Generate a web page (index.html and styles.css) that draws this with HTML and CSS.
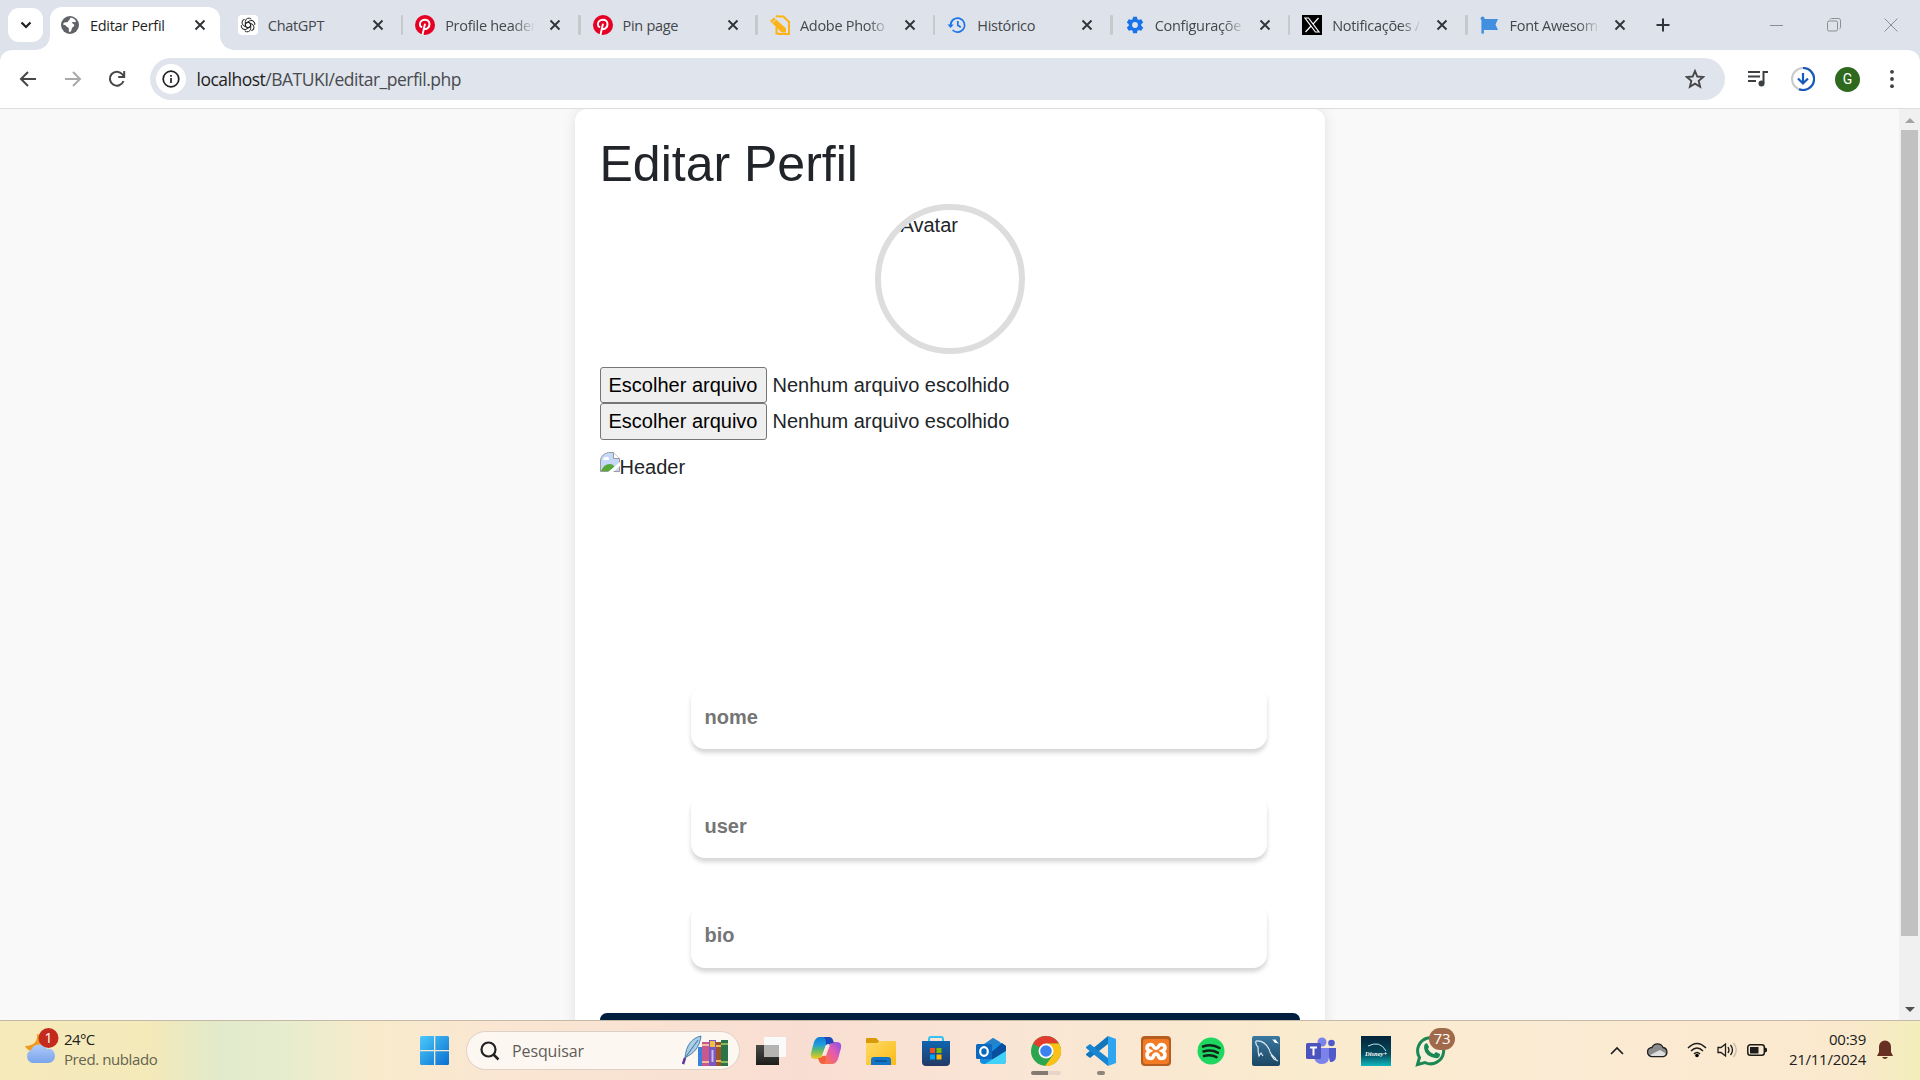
FILE: index.html
```html
<!DOCTYPE html>
<html lang="pt-BR">
<head>
<meta charset="utf-8">
<title>Editar Perfil</title>
<link rel="stylesheet" href="styles.css">
</head>
<body>
<svg class="defs" width="0" height="0">
  <defs>
    <symbol id="close" viewBox="0 0 12 12"><path d="M1.500 1.500l9 9m0-9l-9 9" stroke="currentColor" stroke-width="1.900" fill="none"/></symbol>
    <symbol id="pin" viewBox="0 0 24 24"><circle cx="12" cy="12" r="12" fill="#e60023"/><path d="M9 23.600l2.800-12.300M10.700 16c1 1.500 6.700 1 6.700-5.200 0-3.400-2.700-5.200-5.500-5.200-4 0-6 2.900-6 5.500 0 1.500.7 2.800 1.800 3.200" fill="none" stroke="#fff" stroke-width="2.300" stroke-linecap="round"/></symbol>
    <linearGradient id="win" x1="0" y1="0" x2="1" y2="1"><stop offset="0" stop-color="#4cc9fb"/><stop offset="1" stop-color="#0a6fd0"/></linearGradient>
    <linearGradient id="store" x1="0" y1="0" x2="0" y2="1"><stop offset="0" stop-color="#0f65b0"/><stop offset="1" stop-color="#243864"/></linearGradient>
    <linearGradient id="folder" x1="0" y1="0" x2="1" y2="1"><stop offset="0" stop-color="#ffda66"/><stop offset="1" stop-color="#fbbb16"/></linearGradient>
    <linearGradient id="copA" x1="0" y1="0" x2="0" y2="1"><stop offset="0" stop-color="#137ad5"/><stop offset=".35" stop-color="#1f9ddd"/><stop offset=".6" stop-color="#5fba6a"/><stop offset="1" stop-color="#f3cc21"/></linearGradient>
    <linearGradient id="copB" x1="1" y1="0" x2="0" y2="1"><stop offset="0" stop-color="#8150ef"/><stop offset=".45" stop-color="#e55bae"/><stop offset="1" stop-color="#ff7a35"/></linearGradient>
    <linearGradient id="cloud" x1="0" y1="0" x2="0" y2="1"><stop offset="0" stop-color="#aecbfa"/><stop offset="1" stop-color="#7ba4ec"/></linearGradient>
    <linearGradient id="mysql" x1="0" y1="0" x2="0" y2="1"><stop offset="0" stop-color="#3b78a0"/><stop offset="1" stop-color="#1c4663"/></linearGradient>
    <linearGradient id="disney" x1="0" y1="0" x2="0" y2="1"><stop offset="0" stop-color="#02243a"/><stop offset=".6" stop-color="#044a5c"/><stop offset="1" stop-color="#10b8c0"/></linearGradient>
    <linearGradient id="task" x1="0" y1="0" x2="0" y2="1"><stop offset="0" stop-color="#4a4a48"/><stop offset="1" stop-color="#1d1d1b"/></linearGradient>
  </defs>
</svg>

<header class="browser">
  <div class="tabstrip">
    <div class="tab-search"><svg width="12" height="8" viewBox="0 0 12 8"><path d="M1.500 1.500L6 6l4.500-4.500" fill="none" stroke="#1f1f1f" stroke-width="2.200"/></svg></div>
    <div class="tab active">
      <svg class="fav" viewBox="0 0 20 20"><circle cx="10" cy="10" r="9" fill="#5f6368"/><path d="M10.500 2.800c2.600.2 4.600 1.500 5.600 3.500-.7 1.300-2.300 1.200-3.200.5-1.200.8-1.100 1.500.2 1.900 1.600.5 1.600 2.700 0 3.200-1.800.5-.8 3.300-3.100 5.300-1.600-.3-1.300-2.200-1-3.300C8.500 12 6 12.200 5.500 10.300L3 9.500c.5-1.700 1.500-2.600 3.300-2.300 2.200.4 1.500-1.400 2.700-1.900 1.300-.6.4-1.800 1.500-2.500z" fill="#fff"/></svg>
      <span class="tab-title">Editar Perfil</span><svg class="x"><use href="#close"/></svg>
    </div>
    <div class="tab nosep">
      <svg class="fav" viewBox="0 0 20 20"><rect width="20" height="20" rx="4" fill="#fff"/><g fill="none" stroke="#222" stroke-width="1"><path id="petal" d="M10 7.200l2.700 1.500v4.800a3.500 3.500 0 0 1-6 2.300"/><use href="#petal" transform="rotate(60 10 10)"/><use href="#petal" transform="rotate(120 10 10)"/><use href="#petal" transform="rotate(180 10 10)"/><use href="#petal" transform="rotate(240 10 10)"/><use href="#petal" transform="rotate(300 10 10)"/></g></svg>
      <span class="tab-title">ChatGPT</span><svg class="x"><use href="#close"/></svg>
    </div>
    <div class="tab"><svg class="fav"><use href="#pin"/></svg><span class="tab-title fade">Profile header</span><svg class="x"><use href="#close"/></svg></div>
    <div class="tab"><svg class="fav"><use href="#pin"/></svg><span class="tab-title">Pin page</span><svg class="x"><use href="#close"/></svg></div>
    <div class="tab">
      <svg class="fav" viewBox="0 0 20 20"><path d="M8 1.500h5.500L19 7v12H8" fill="none" stroke="#fbb317" stroke-width="2"/><path d="M6 2l2-1.500M6.500 12v6.500H9" stroke="#fbb317" stroke-width="2" fill="none"/><path d="M0 6l4-3.500L16 13.500v4h-4.500z" fill="#fbb317"/><path d="M2.500 7.500l4-3.500" stroke="#dee1e9"/></svg>
      <span class="tab-title fade">Adobe Photo</span><svg class="x"><use href="#close"/></svg>
    </div>
    <div class="tab">
      <svg class="fav" viewBox="0 0 20 20"><path d="M3.600 10a7 7 0 1 1 2 5M10.800 6v4.300l3 2" fill="none" stroke="#1a73e8" stroke-width="1.700"/><path d="M.5 9.500h6.200L3.600 13z" fill="#1a73e8"/></svg>
      <span class="tab-title">Histórico</span><svg class="x"><use href="#close"/></svg>
    </div>
    <div class="tab">
      <svg class="fav" viewBox="0 0 24 24"><path fill="#1a73e8" d="M19.430 12.980c.04-.32.070-.64.070-.98s-.03-.66-.07-.98l2.110-1.650c.19-.15.240-.42.120-.64l-2-3.460c-.12-.22-.39-.3-.61-.22l-2.490 1c-.52-.4-1.080-.73-1.690-.98l-.38-2.650A.488.488 0 0 0 14 2h-4c-.25 0-.46.180-.49.420l-.38 2.650c-.61.250-1.170.59-1.690.98l-2.490-1c-.23-.09-.49 0-.61.220l-2 3.460c-.13.220-.07.490.12.640l2.110 1.650c-.04.320-.07.650-.07.980s.03.660.07.980l-2.110 1.650c-.19.150-.24.420-.12.640l2 3.460c.12.220.39.300.61.220l2.490-1c.52.400 1.080.73 1.690.98l.38 2.650c.03.240.24.420.49.420h4c.25 0 .46-.18.490-.42l.38-2.650c.61-.25 1.170-.59 1.690-.98l2.490 1c.23.090.49 0 .61-.22l2-3.460c.12-.22.070-.49-.12-.64l-2.110-1.650zM12 15.500a3.500 3.500 0 1 1 0-7 3.500 3.500 0 0 1 0 7z"/></svg>
      <span class="tab-title fade">Configuraçõe</span><svg class="x"><use href="#close"/></svg>
    </div>
    <div class="tab">
      <svg class="fav" viewBox="0 0 20 20"><path d="M0 0h20v20H0z"/><path d="M3 3h3.500L17 17h-3.500zM16.500 3L11 9.200M9 11l-5.500 6" fill="none" stroke="#fff" stroke-width="1.200"/></svg>
      <span class="tab-title fade">Notificações /</span><svg class="x"><use href="#close"/></svg>
    </div>
    <div class="tab">
      <svg class="fav" viewBox="0 0 20 20"><path d="M2 3h1.200v15H2z" stroke="#418fde" stroke-width="1.200"/><path d="M2.500 4H18l-2.500 5.500L18 15H2.500z" fill="#418fde"/><circle cx="2.600" cy="3.500" r="2" fill="#418fde"/></svg>
      <span class="tab-title fade">Font Awesom</span><svg class="x"><use href="#close"/></svg>
    </div>
    <div class="new-tab"><svg width="14" height="14" viewBox="0 0 14 14"><path d="M7 .5v13M.5 7h13" stroke="#303438" stroke-width="2"/></svg></div>
    <div class="win-controls">
      <svg width="14" height="14" viewBox="0 0 14 14"><path d="M0 7.500h13" stroke="#8b8e93"/></svg>
      <svg width="14" height="14" viewBox="0 0 14 14"><rect x=".5" y="3" width="10" height="10" rx="1.500" fill="none" stroke="#8b8e93"/><path d="M3 1.500q.3-1 1.500-1h7q2 0 2 2v7q0 1-1 1.500" fill="none" stroke="#8b8e93"/></svg>
      <svg width="14" height="14" viewBox="0 0 14 14"><path d="M.5.5l13 13m0-13l-13 13" stroke="#8b8e93"/></svg>
    </div>
  </div>
  <div class="toolbar">
    <svg class="nav" viewBox="0 0 20 20"><path d="M18 10H3.500M10 3l-7 7 7 7" fill="none" stroke="#474747" stroke-width="2"/></svg>
    <svg class="nav" viewBox="0 0 20 20"><path d="M2 10h14.500M10 3l7 7-7 7" fill="none" stroke="#a9a9a9" stroke-width="2"/></svg>
    <svg class="nav" viewBox="0 0 20 20"><path d="M16.500 12a7 7 0 1 1-1-6.500L17 7.500M17.200 2v6h-6" fill="none" stroke="#474747" stroke-width="2"/></svg>
    <div class="omnibox">
      <span class="site-info"><svg width="18" height="18" viewBox="0 0 18 18"><circle cx="9" cy="9" r="7.800" fill="none" stroke="#202124" stroke-width="1.700"/><path d="M9 8v5M9 5v1.800" stroke="#202124" stroke-width="1.700"/></svg></span>
      <span class="url">localhost<span class="path">/BATUKI/editar_perfil.php</span></span>
      <svg class="star" viewBox="0 0 20 20"><path d="M10 2l2.300 5.500 6 .5-4.600 3.900 1.400 5.800L10 14.600l-5.100 3.100 1.400-5.800L1.700 8l6-.5z" fill="none" stroke="#474747" stroke-width="1.900"/></svg>
    </div>
    <svg class="tool" viewBox="0 0 24 24"><path d="M2 5h12M2 9.500h12M2 14h8" stroke="#3c4043" stroke-width="2"/><path d="M17.500 16V5H22" fill="none" stroke="#3c4043" stroke-width="2"/><circle cx="15.500" cy="16.500" r="3" fill="#3c4043"/></svg>
    <svg class="tool" viewBox="0 0 24 24"><circle cx="12" cy="12" r="11" fill="none" stroke="#c8cace" stroke-width="2"/><path d="M12 1a11 11 0 1 1-4 21.200" fill="none" stroke="#185abc" stroke-width="2.200"/><path d="M12 6v10M7 11.500l5 5 5-5" fill="none" stroke="#185abc" stroke-width="2.200"/></svg>
    <span class="account">G</span>
    <svg class="tool" viewBox="0 0 24 24"><g fill="#3c4043"><circle cx="12" cy="4.800" r="1.900"/><circle cx="12" cy="12" r="1.900"/><circle cx="12" cy="19.200" r="1.900"/></g></svg>
  </div>
</header>

<div class="viewport">
  <main class="page">
    <section class="card">
      <h1>Editar Perfil</h1>
      <div class="avatar">Avatar</div>
      <div class="file"><span class="file-btn">Escolher arquivo</span><span>Nenhum arquivo escolhido</span></div>
      <div class="file"><span class="file-btn">Escolher arquivo</span><span>Nenhum arquivo escolhido</span></div>
      <div class="header-img">
        <svg width="20" height="20" viewBox="0 0 20 20"><path d="M.5 19.500V8q1-6 8-7.500h5l6 6v13z" fill="#c6d8f7" stroke="#9b9b9b"/><path d="M13.500.5v6h6" fill="#fff" stroke="#9b9b9b"/><path d="M3 8q0-3 3-3 3-1 3 3z" fill="#fff"/><path d="M1 19q3-7 8.500-7 4 0 5 3l-4 4z" fill="#57a83a"/><path d="M8 20L20 10v4l-7 6z" fill="#fff"/></svg><span>Header</span>
      </div>
      <form class="fields">
        <input type="text" placeholder="nome">
        <input type="text" placeholder="user">
        <input type="text" placeholder="bio">
      </form>
      <div class="submit"></div>
    </section>
  </main>
  <aside class="scrollbar">
    <svg width="10" height="21" viewBox="0 0 10 21"><path d="M0 14l5-5 5 5z" fill="#a3a3a3"/></svg>
    <div class="track"><div class="thumb"></div></div>
    <svg width="10" height="22" viewBox="0 0 10 22"><path d="M0 9h10l-5 5z" fill="#505050"/></svg>
  </aside>
</div>

<footer class="taskbar">
  <div class="weather">
    <svg width="36" height="40" viewBox="0 -4 36 40"><path d="M14 3c1 7-3 12-12 12 3 7 15 7 18 0V5z" fill="#f09a24"/><path d="M9 32a7 7 0 0 1-1-13 9 9 0 0 1 16-1c5-1 8 3 8 7s-3 7-7 7z" fill="url(#cloud)"/><circle cx="25.500" cy="7" r="10" fill="#c42b1c"/><text x="25.500" y="12" text-anchor="middle" class="badge-text">1</text></svg>
    <div class="two-lines"><span>24°C</span><span class="muted">Pred. nublado</span></div>
  </div>
  <div class="apps">
    <svg class="start" width="30" height="30" viewBox="0 0 30 30"><path d="M0 1.500Q0 0 1.500 0H14v14H0zM15.300 0h12.200Q29 0 29 1.500V14H15.300zM0 15.300h14V29H1.500Q0 29 0 27.500zM15.300 15.300H29v12.200q0 1.500-1.500 1.500H15.300z" fill="url(#win)"/></svg>
    <div class="search">
      <svg width="20" height="20" viewBox="0 0 20 20"><circle cx="8.500" cy="8.500" r="7" fill="none" stroke="#222" stroke-width="2.200"/><path d="M13.500 13.500l5 5" stroke="#222" stroke-width="2.500"/></svg>
      <span>Pesquisar</span>
      <svg class="books" width="48" height="34" viewBox="0 0 48 34"><path d="M3 24C4 11 10 4 19 2c-1 8-5 16-13 20z" fill="#a9cde6" stroke="#4b82ae"/><path d="M3 24L16 6" stroke="#426f9b"/><path d="M1 30l2-6" stroke="#60359a" stroke-width="2.500"/><path d="M16 13h4v19h-4z" fill="#3b82dc"/><path d="M20 8h7v24h-7z" fill="#c9588f"/><path d="M20 11h7M20 28h7" stroke="#f3bd9a" stroke-width="2"/><path d="M27 6h7v26h-7z" fill="#7858c1"/><path d="M28 7h5v6h-5z" fill="#f3bc42"/><path d="M30.500 16v12" stroke="#cdb9f0" stroke-width="2"/><path d="M34 8h5v24h-5z" fill="#9a5426"/><path d="M34 12h5M34 27h5" stroke="#ecb95d" stroke-width="2"/><path d="M39 6h7v26h-7z" fill="#2c7348"/><path d="M39 10h7M39 28h7" stroke="#b4ca62" stroke-width="1.500"/></svg>
    </div>
    <div class="icons">
      <div class="app"><svg viewBox="0 0 32 32"><path d="M1 10h23v20H1z" fill="url(#task)"/><rect x="9" y="2" width="22" height="20" rx="1" fill="#fafafa"/><path d="M9 10h15v12H9z" fill="#b5b4b2"/></svg></div>
      <div class="app"><svg viewBox="0 0 32 32"><path d="M10 2h9l-7 19q-1 3-4 3H5q-5 0-4-6L4 7q2-5 6-5z" fill="url(#copA)"/><path d="M22 29h-9l7-19q1-3 4-3h3q5 0 4 6l-3 11q-2 5-6 5z" fill="url(#copB)"/><path d="M14 2h5q3 0 4 3l1 3h-1q-3 0-4 3l-3-1q0-6-2-8z" fill="#1d49bf"/><path d="M8 23h1q3 0 4-3l3 1q0 6-2 8h-1q-3 0-4-3z" fill="#f2603c"/><path d="M15.500 11q1-2 3-2h1l-3.500 10q-1 2-3 2h-1z" fill="#fbe7df"/></svg></div>
      <div class="app"><svg viewBox="0 0 32 32"><path d="M1 4q0-1 1-1h9l3 3v5H1z" fill="#d99a09"/><path d="M1 8h11l3-2h15q1 0 1 1v22q0 1-1 1H2q-1 0-1-1z" fill="url(#folder)"/><path d="M6 30v-5q0-3 3-3h14q3 0 3 3v5z" fill="#1374c8"/><path d="M10 26h12" stroke="#0a4f91" stroke-width="1.500"/></svg></div>
      <div class="app"><svg viewBox="0 0 32 32"><path d="M9 7V4q0-2 2-2h10q2 0 2 2v3" fill="none" stroke="#35c1f1" stroke-width="2"/><path d="M2 6h28v21q0 4-4 4H6q-4 0-4-4z" fill="url(#store)"/><path d="M10 13h5v5h-5z" fill="#f25022"/><path d="M16.500 13h5v5h-5z" fill="#7fba00"/><path d="M10 19.500h5v5h-5z" fill="#00a4ef"/><path d="M16.500 19.500h5v5h-5z" fill="#ffb900"/></svg></div>
      <div class="app"><svg viewBox="0 0 32 32"><path d="M5 12l13-9 13 8v15q0 3-3 3H9q-4 0-4-3z" fill="#168ce1"/><path d="M5 12l13-9 7 4-15 12z" fill="#2383cc"/><path d="M13 20l14-12 4 3v5l-13 9z" fill="#094f9f"/><path d="M10 29l21-13v10q0 3-3 3z" fill="#42d2f7"/><rect x="1" y="9" width="16" height="15" rx="1.500" fill="#0b68be"/><ellipse cx="9" cy="16.500" rx="3.800" ry="4.300" fill="none" stroke="#fff" stroke-width="2.200"/></svg></div>
      <div class="app"><svg viewBox="0 0 32 32"><circle cx="16" cy="16" r="15" fill="#2da44e"/><path d="M16 16L3 8.500A15 15 0 0 1 29 8.500H16z" fill="#e33b2e"/><path d="M16 8.500h13A15 15 0 0 1 15 31l8-11z" fill="#fbc116"/><circle cx="16" cy="16" r="7.500" fill="#fff"/><circle cx="16" cy="16" r="5.800" fill="#3b82ee"/></svg><i class="running wide"></i></div>
      <div class="app"><svg viewBox="0 0 32 32"><path d="M23 1v8L5 23l-4-3v-1z" fill="#1276bd"/><path d="M1 12l4-3 18 14v8L1 13z" fill="#1685d2"/><path d="M23 1l8 3v24l-8 3z" fill="#2da5f0"/></svg><i class="running"></i></div>
      <div class="app"><svg viewBox="0 0 32 32"><rect x="1" y="1" width="30" height="30" rx="4" fill="#b65d20"/><rect x="3" y="4" width="26" height="25" rx="3" fill="#f47b25"/><path d="M11 9.500c3 0 2 4 5 4s2-4 5-4c5 0 5 5 1.500 6.500C26 18 26 23.500 21 23.500c-3 0-2-4.500-5-4.500s-2 4.500-5 4.500c-5 0-5-5.500-1.500-7.500C6 14.500 6 9.500 11 9.500z" fill="none" stroke="#fff" stroke-width="3.600"/></svg></div>
      <div class="app"><svg viewBox="0 0 32 32"><circle cx="16" cy="16" r="13.500" fill="#1ed760"/><path d="M8 11.500q9-3 16.500 1.500M8.500 16.500q8-2.500 14.500 1.300M9 21q7-2 12.500 1.200" fill="none" stroke="#10251a" stroke-width="2.500" stroke-linecap="round"/></svg></div>
      <div class="app"><svg viewBox="0 0 32 32"><rect x="2" y="1" width="28" height="30" rx="2" fill="url(#mysql)"/><path d="M6 6q8-1 13 8 1 5 5 8 2 1 2 3l2 1M6 6q-1 3 2 6 0 6 1 9l2-3 2 3M21 20l3 4 4 2" fill="none" stroke="#dce8f0" stroke-width="1.200"/><path d="M22 4l2 1 1-1 4 5-2-1-2 0z" fill="#fff"/></svg></div>
      <div class="app"><svg viewBox="0 0 32 32"><circle cx="17" cy="7" r="4.500" fill="#7b83eb"/><circle cx="26.500" cy="8" r="3.300" fill="#5059c9"/><path d="M22 13h9v8q0 6-6 6z" fill="#5059c9"/><path d="M9 13h15v9q0 7-7 7-6 0-8-6z" fill="#7b83eb"/><rect x="1" y="8" width="15" height="16" rx="1.500" fill="#4b53bc"/><path d="M5 12.500h7M8.500 12.500v8" stroke="#fff" stroke-width="2"/></svg></div>
      <div class="app"><svg viewBox="0 0 32 32"><path d="M1 1h30v30H1z" fill="url(#disney)"/><path d="M8 11q12-6 18 5" fill="none" stroke="#bce7ed"/><text x="5" y="20.500" class="disney">Disney+</text></svg></div>
      <div class="app"><svg viewBox="0 0 32 32"><path d="M2.500 29.500l2-7A13 13 0 1 1 10 27.500z" fill="#f5efdc" stroke="#1b8755" stroke-width="3"/><path d="M10 9q2-2 3 1l1 2-1 2q2 4 6 5l2-2 4 2q0 5-5 4-10-2-11-10 0-3 1-4z" fill="#1b8755"/></svg><span class="count">73</span></div>
    </div>
  </div>
  <div class="tray">
    <svg width="14" height="9" viewBox="0 0 14 9"><path d="M1 8l6-6 6 6" fill="none" stroke="#1c1c1c" stroke-width="1.600"/></svg>
    <svg class="onedrive" width="21" height="16" viewBox="0 0 21 16"><path d="M5 14.500a4 4 0 0 1 0-9 6 6 0 0 1 11 0 4.600 4.600 0 0 1 .5 9z" fill="#8c8c8c" stroke="#1f1f1f" stroke-width="1.300"/><path d="M3 13l10-5 5 3q1 2-2 3H5z" fill="#dedede"/></svg>
    <svg class="wifi" width="20" height="16" viewBox="0 0 20 16"><path d="M1 6q9-9 18 0M4 9q6-6 12 0M7 12q3-3 6 0" fill="none" stroke="#1c1c1c" stroke-width="1.500"/><circle cx="10" cy="13.500" r="1.800"/></svg>
    <svg class="sound" width="20" height="16" viewBox="0 0 20 16"><path d="M1 5.500h3L8.500 2v12L4 10.500H1z" fill="none" stroke="#1c1c1c" stroke-width="1.300"/><path d="M11 5q2 3 0 6M13.500 3q4 5 0 10" fill="none" stroke="#1c1c1c" stroke-width="1.300"/><path d="M16.500 1q5.500 7 0 14" fill="none" stroke="#c8bba9" stroke-width="1.300"/></svg>
    <svg class="battery" width="21" height="14" viewBox="0 0 21 14"><rect x=".8" y="1.800" width="16.500" height="10.500" rx="2.500" fill="none" stroke="#1c1c1c" stroke-width="1.500"/><path d="M3 4h8.500v6.500H3zM18 4.500l2 1v3l-2 1z" fill="#1c1c1c"/></svg>
    <div class="two-lines clock"><span>00:39</span><span>21/11/2024</span></div>
    <svg class="bell" width="16" height="20" viewBox="0 0 16 20"><path d="M2 12V6.500a6 6 0 0 1 12 0V12l2 4H0zM5 17h6q-3 4-6 0z" fill="#673022"/></svg>
  </div>
</footer>
</body>
</html>
```
FILE: styles.css
```css
* { box-sizing: border-box; }
body {
  margin: 0;
  width: 1920px;
  height: 1080px;
  overflow: hidden;
  display: flex;
  flex-direction: column;
  background: #fff;
  font-family: "Open Sans", "Noto Sans", sans-serif;
}
svg { display: block; flex: none; }
.defs { width: 0; height: 0; }

/* Browser chrome */
.browser { height: 109px; flex: none; background: #dee2ea; border-bottom: 1px solid #dedede; }
.tabstrip { display: flex; height: 50px; position: relative; }
.tab-search { width: 35px; height: 34px; margin: 8px 7px 0 8px; border-radius: 11px; background: #fff; display: flex; align-items: center; justify-content: center; }
.tab { width: 177.400px; flex: none; height: 50px; display: flex; align-items: center; padding: 0 0 0 10px; position: relative; color: #44474b; }
.tab:not(.active):not(.nosep)::before { content: ""; position: absolute; left: -4.500px; top: 15px; width: 2.500px; height: 20px; border-radius: 1px; background: #c6c8cc; }
.tab.active { color: #1f1f1f; width: 170px; height: 43px; margin: 7px 7.800px 0 0; padding-bottom: 7px; background: #fff; border-radius: 12px 12px 0 0; }
.tab.active::before, .tab.active::after { content: ""; position: absolute; bottom: 0; width: 14px; height: 14px; }
.tab.active::before { left: -14px; background: radial-gradient(circle at 0 0, transparent 13.500px, #fff 14px); }
.tab.active::after { right: -14px; background: radial-gradient(circle at 100% 0, transparent 13.500px, #fff 14px); }
.fav { width: 20px; height: 20px; }
.tab-title { width: 90px; margin-left: 10px; font-size: 14.500px; letter-spacing: -.3px; white-space: nowrap; }
.fade { -webkit-mask-image: linear-gradient(90deg, #000 68px, transparent 90px); mask-image: linear-gradient(90deg, #000 68px, transparent 90px); }
.x { width: 12px; height: 12px; margin-left: 14px; color: #303438; }
.new-tab { margin: 18px 0 0 9px; }
.win-controls { position: absolute; right: 22px; top: 18px; display: flex; gap: 43px; }
.toolbar { height: 58px; background: #fff; border-radius: 12px 12px 0 0; display: flex; align-items: center; padding-left: 18px; }
.nav { width: 20px; height: 20px; margin-right: 25px; }
.nav + .nav { margin-right: 24px; }
.nav + .nav + .nav { margin-right: 23px; }
.omnibox { width: 1575px; height: 42px; border-radius: 21px; background: #e0e4ec; display: flex; align-items: center; padding: 0 20px 0 6px; margin-right: 21px; }
.site-info { width: 30px; height: 30px; border-radius: 50%; background: #fff; display: flex; align-items: center; justify-content: center; }
.url { margin-left: 10.500px; flex: 1; font-size: 17.500px; color: #1f1f1f; letter-spacing: -.5px; }
.path { color: #474a4e; }
.star { width: 20px; height: 20px; }
.tool { width: 24px; height: 24px; margin-right: 21px; }
.account { width: 25px; height: 25px; margin-left: -1px; margin-right: 20px; background: #2f691e; border-radius: 50%; color: #fff; display: flex; align-items: center; justify-content: center; font: 14px Roboto, sans-serif; }
.toolbar > svg:last-child { margin-right: 0; }

/* Page */
.viewport { height: 911px; flex: none; display: flex; }
.page { flex: 1; overflow: hidden; background: #f9f9f9; display: flex; justify-content: center; align-items: flex-start; font: 20px/30px "Liberation Sans", Arial, sans-serif; color: #212529; }
.card { width: 750px; height: 1000px; padding: 25px; border-radius: 12px; background: #fff; box-shadow: 0 0 14px rgba(0, 0, 0, .1); }
h1 { margin: 0 0 10px; font-size: 50px; line-height: 60px; font-weight: 400; }
.avatar { width: 150px; height: 150px; margin: 0 auto 12.500px; border: 6px solid #ddd; border-radius: 50%; overflow: hidden; padding-left: 20px; }
.file { height: 36.500px; display: flex; align-items: center; gap: 6px; }
.file-btn { width: 167px; height: 36.500px; border: 1px solid #767676; border-radius: 3px; background: #efefef; color: #000; display: flex; align-items: center; justify-content: center; }
.header-img { height: 200px; margin-top: 12px; display: flex; align-items: flex-start; }
.header-img span { line-height: 30px; }
.fields { margin: 34px 0 0 91px; display: flex; flex-direction: column; gap: 46.300px; }
.fields input { width: 576px; height: 63px; padding: 0 14px; border: 0; border-radius: 14px; background: #fff; font: bold 20px "Liberation Sans", Arial, sans-serif; box-shadow: 0 4px 4px rgba(0, 0, 0, .16); }
.fields input:last-child { height: 64px; padding-bottom: 1px; }
.fields input::placeholder { color: #757575; opacity: 1; }
.submit { height: 50px; margin-top: 45.400px; border-radius: 7px; background: #001f3f; }
.scrollbar { width: 21px; background: #f0f0f0; display: flex; flex-direction: column; align-items: center; }
.track { flex: 1; width: 17px; }
.thumb { height: 806px; background: #c1c1c1; }

/* Taskbar */
.taskbar { height: 60px; flex: none; border-top: 1px solid #c5b9a8; display: flex; background: linear-gradient(90deg, #f6eabb 0, #f3e9b9 150px, #e1eacb 220px, #e6ecce 280px, #f8ebcb 370px, #fae6d3 500px, #f8ded2 800px, #fae5d5 1000px, #f9ebce 1300px, #fcebd4 1550px, #fae9cd 1850px, #f3edbb 1920px); color: #202020; font-size: 15px; }
.weather { display: flex; width: 420px; padding: 6px 0 0 23px; }
.two-lines { display: flex; flex-direction: column; line-height: 20px; }
.weather .two-lines { margin: 2px 0 0 5px; }
.weather .two-lines span:first-child { letter-spacing: -.6px; }
.muted { color: #66634f; letter-spacing: -.4px; }
.badge-text { fill: #fff; font: 14px "Open Sans", sans-serif; }
.apps { display: flex; }
.start { margin: 15px 17px 0 0; }
.search { width: 274px; height: 39px; margin: 10px 0 0 -1px; border-radius: 20px; border: 1px solid #dfd0c6; background: #fdf7f1; display: flex; align-items: center; padding: 0 9px 0 13px; color: #5f5d59; font-size: 16px; }
.search span { margin-left: 12px; flex: 1; letter-spacing: -.1px; }
.icons { display: flex; gap: 23px; margin: 14px 0 0 15px; }
.app { position: relative; width: 32px; height: 32px; }
.app svg { width: 32px; height: 32px; }
.running { position: absolute; left: 12px; bottom: -8px; width: 8px; height: 4px; border-radius: 2px; background: #8c857c; }
.running.wide { left: 1px; width: 30px; background: linear-gradient(90deg, #837970 17px, #e6d6c9 17px); }
.count { position: absolute; left: 14px; top: -7px; width: 26px; height: 22px; border-radius: 11px; background: #9f694a; color: #fff; font-size: 15px; line-height: 21px; text-align: center; }
.disney { fill: #fff; font: italic bold 6.500px "Liberation Serif", serif; }
.tray { display: flex; align-items: center; margin-left: auto; padding: 0 27px 0 0; height: 58px; }
.onedrive { margin-left: 23px; }
.wifi { margin-left: 19px; }
.sound, .battery { margin-left: 10px; }
.clock { width: 85px; margin: -2px 11px 0 13px; text-align: right; letter-spacing: -.25px; }
```
